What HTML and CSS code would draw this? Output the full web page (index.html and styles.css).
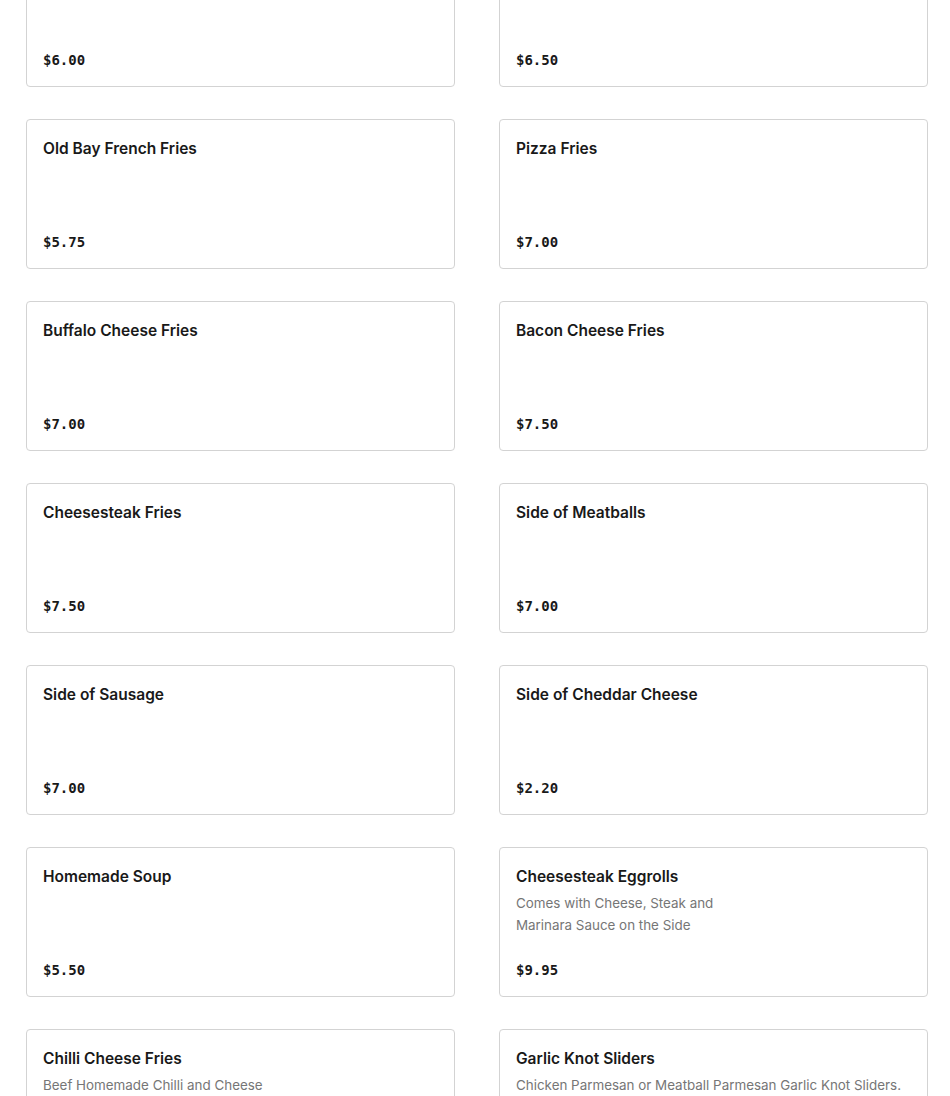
FILE: index.html
```html
<!DOCTYPE html>
<html lang="en">
<head>
<meta charset="utf-8">
<title>Menu</title>
<link rel="stylesheet" href="styles.css">
</head>
<body>
<div class="viewport">
  <div class="menu-list">
    <div class="card"><div class="name">Regular French Fries</div><div class="price">$6.00</div></div>
    <div class="card"><div class="name">Cheese Fries</div><div class="price">$6.50</div></div>
    <div class="card"><div class="name">Old Bay French Fries</div><div class="price">$5.75</div></div>
    <div class="card"><div class="name">Pizza Fries</div><div class="price">$7.00</div></div>
    <div class="card"><div class="name">Buffalo Cheese Fries</div><div class="price">$7.00</div></div>
    <div class="card"><div class="name">Bacon Cheese Fries</div><div class="price">$7.50</div></div>
    <div class="card"><div class="name">Cheesesteak Fries</div><div class="price">$7.50</div></div>
    <div class="card"><div class="name">Side of Meatballs</div><div class="price">$7.00</div></div>
    <div class="card"><div class="name">Side of Sausage</div><div class="price">$7.00</div></div>
    <div class="card"><div class="name">Side of Cheddar Cheese</div><div class="price">$2.20</div></div>
    <div class="card"><div class="name">Homemade Soup</div><div class="price">$5.50</div></div>
    <div class="card"><div class="name">Cheesesteak Eggrolls</div><div class="desc narrow">Comes with Cheese, Steak and Marinara Sauce on the Side</div><div class="price">$9.95</div></div>
    <div class="card"><div class="name">Chilli Cheese Fries</div><div class="desc">Beef Homemade Chilli and Cheese</div><div class="price">$7.50</div></div>
    <div class="card"><div class="name">Garlic Knot Sliders</div><div class="desc">Chicken Parmesan or Meatball Parmesan Garlic Knot Sliders.</div><div class="price">$9.95</div></div>
  </div>
</div>
</body>
</html>
```

FILE: styles.css
```css
html, body {
  margin: 0;
  padding: 0;
  background: #ffffff;
}
body {
  font-family: Inter, "Noto Sans", "Liberation Sans", sans-serif;
  color: #191919;
  overflow: hidden;
}
.viewport {
  height: 1096px;
  overflow: hidden;
}
.menu-list {
  display: grid;
  grid-template-columns: 429px 429px;
  column-gap: 44px;
  row-gap: 32px;
  padding-left: 26px;
  margin-top: -63px;
}
.card {
  box-sizing: border-box;
  height: 150px;
  border: 1px solid #d3d3d3;
  border-radius: 4px;
  padding: 17px 16px 16px;
  display: flex;
  flex-direction: column;
  background: #fff;
}
.name {
  font-size: 15.5px;
  font-weight: 600;
  line-height: 24px;
  color: #191919;
}
.desc {
  margin-top: 3px;
  font-size: 13.4px;
  line-height: 22px;
  color: #767676;
}
.desc.narrow {
  max-width: 220px;
}
.price {
  margin-top: auto;
  font-family: "DejaVu Sans Mono", "Liberation Mono", monospace;
  font-weight: bold;
  font-size: 14px;
  line-height: 18px;
  padding-bottom: 1px;
  color: #191919;
}
```
